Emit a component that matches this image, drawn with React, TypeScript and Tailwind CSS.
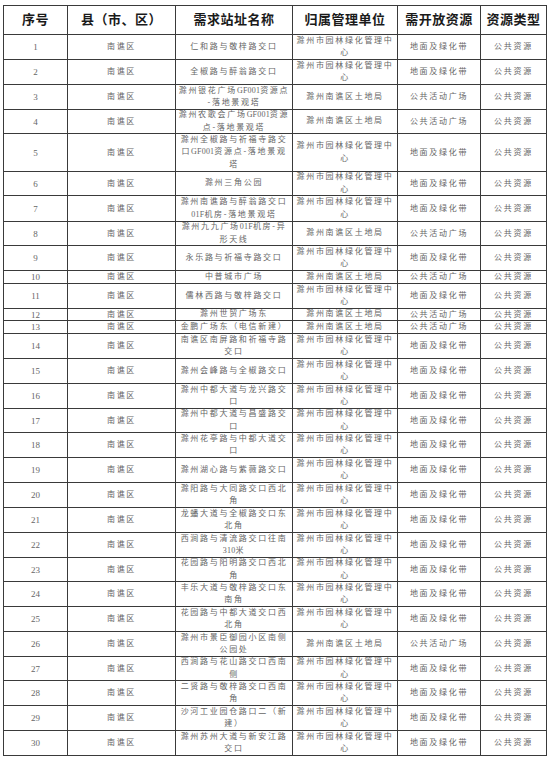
const A = ['滁州市园林绿化管理中', '心']
const B = ['滁州南谯区土地局']
const G = '地面及绿化带'
const P = '公共活动广场'

type Row = {
  h: string
  site: string[]
  unit: string[]
  res: string
}

const rows: Row[] = [
  { h: 'h-[25px]', site: ['仁和路与敬梓路交口'], unit: A, res: G },
  { h: 'h-[25px]', site: ['全椒路与醉翁路交口'], unit: A, res: G },
  { h: 'h-[25px]', site: ['滁州银花广场GF001资源点', '-落地景观塔'], unit: B, res: P },
  { h: 'h-[24px]', site: ['滁州农歌会广场GF001资源', '点-落地景观塔'], unit: B, res: P },
  { h: 'h-[38px]', site: ['滁州全椒路与祈福寺路交', '口GF001资源点-落地景观', '塔'], unit: A, res: G },
  { h: 'h-[24px]', site: ['滁州三角公园'], unit: A, res: G },
  { h: 'h-[26px]', site: ['滁州南谯路与醉翁路交口', '01F机房-落地景观塔'], unit: A, res: G },
  { h: 'h-[24px]', site: ['滁州九九广场01F机房-异', '形天线'], unit: B, res: P },
  { h: 'h-[25px]', site: ['永乐路与祈福寺路交口'], unit: A, res: G },
  { h: 'h-[13px]', site: ['中普城市广场'], unit: B, res: P },
  { h: 'h-[25px]', site: ['儒林西路与敬梓路交口'], unit: A, res: G },
  { h: 'h-[12px]', site: ['滁州世贸广场东'], unit: B, res: P },
  { h: 'h-[13px]', site: ['金鹏广场东（电信新建）'], unit: B, res: P },
  { h: 'h-[25px]', site: ['南谯区南屏路和祈福寺路', '交口'], unit: A, res: G },
  { h: 'h-[25px]', site: ['滁州会峰路与全椒路交口'], unit: A, res: G },
  { h: 'h-[25px]', site: ['滁州中都大道与龙兴路交', '口'], unit: A, res: G },
  { h: 'h-[24px]', site: ['滁州中都大道与昌盛路交', '口'], unit: A, res: G },
  { h: 'h-[25px]', site: ['滁州花亭路与中都大道交', '口'], unit: A, res: G },
  { h: 'h-[25px]', site: ['滁州湖心路与紫薇路交口'], unit: A, res: G },
  { h: 'h-[25px]', site: ['滁阳路与大同路交口西北', '角'], unit: A, res: G },
  { h: 'h-[25px]', site: ['龙蟠大道与全椒路交口东', '北角'], unit: A, res: G },
  { h: 'h-[25px]', site: ['西涧路与清流路交口往南', '310米'], unit: A, res: G },
  { h: 'h-[24px]', site: ['花园路与阳明路交口西北', '角'], unit: A, res: G },
  { h: 'h-[25px]', site: ['丰乐大道与敬梓路交口东', '南角'], unit: A, res: G },
  { h: 'h-[25px]', site: ['花园路与中都大道交口西', '北角'], unit: A, res: G },
  { h: 'h-[25px]', site: ['滁州市景臣御园小区南侧', '公园处'], unit: B, res: P },
  { h: 'h-[24px]', site: ['西涧路与花山路交口西南', '侧'], unit: A, res: G },
  { h: 'h-[25px]', site: ['二贤路与敬梓路交口西南', '角'], unit: A, res: G },
  { h: 'h-[25px]', site: ['沙河工业园仓路口二（新', '建）'], unit: A, res: G },
  { h: 'h-[25px]', site: ['滁州苏州大道与新安江路', '交口'], unit: A, res: G },
]

const headers = ['序号', '县（市、区）', '需求站址名称', '归属管理单位', '需开放资源', '资源类型']

// latin runs (GF001, 01F) are set tight, the chinese text spaced out
const Text = ({ s }: { s: string }) => (
  <>
    {s.split(/([A-Za-z0-9]+)/).map((part, i) =>
      /^[A-Za-z0-9]+$/.test(part) ? (
        <span key={i} className="tracking-[0.2px]">
          {part}
        </span>
      ) : (
        part
      ),
    )}
  </>
)

// zero-height box so multi-line text overflows around the centre without stretching the row
const Lines = ({ lines }: { lines: string[] }) => (
  <div className="flex h-0 flex-col items-center justify-center">
    {lines.map((l, i) => (
      <span key={i} className="whitespace-nowrap leading-[12.5px]">
        <Text s={l} />
      </span>
    ))}
  </div>
)

const cell = 'border border-[#3a3a3a] p-0 text-center align-middle'

export default function App() {
  return (
    <div className="h-[761px] w-[550px] overflow-hidden bg-white pl-[3px] pt-[5px] font-['Liberation_Serif','Noto_Sans_CJK_SC',serif]">
      <table className="w-[543px] table-fixed border-collapse">
        <colgroup>
          <col className="w-[64px]" />
          <col className="w-[108px]" />
          <col className="w-[117px]" />
          <col className="w-[105px]" />
          <col className="w-[83px]" />
          <col className="w-[66px]" />
        </colgroup>
        <thead>
          <tr className="h-[29px]">
            {headers.map((h) => (
              <th
                key={h}
                className={`${cell} text-[13px] leading-[16px] font-bold tracking-[0.5px] text-[#1a1a1a]`}
              >
                {h}
              </th>
            ))}
          </tr>
        </thead>
        <tbody className="text-[8px] leading-[10px] tracking-[1.7px] text-[#666666]">
          {rows.map((r, i) => (
            <tr key={i} className={r.h}>
              <td className={`${cell} text-[9px] tracking-normal`}>{i + 1}</td>
              <td className={cell}>南谯区</td>
              <td className={cell}>
                <Lines lines={r.site} />
              </td>
              <td className={cell}>
                <Lines lines={r.unit} />
              </td>
              <td className={cell}>{r.res}</td>
              <td className={cell}>公共资源</td>
            </tr>
          ))}
        </tbody>
      </table>
    </div>
  )
}
